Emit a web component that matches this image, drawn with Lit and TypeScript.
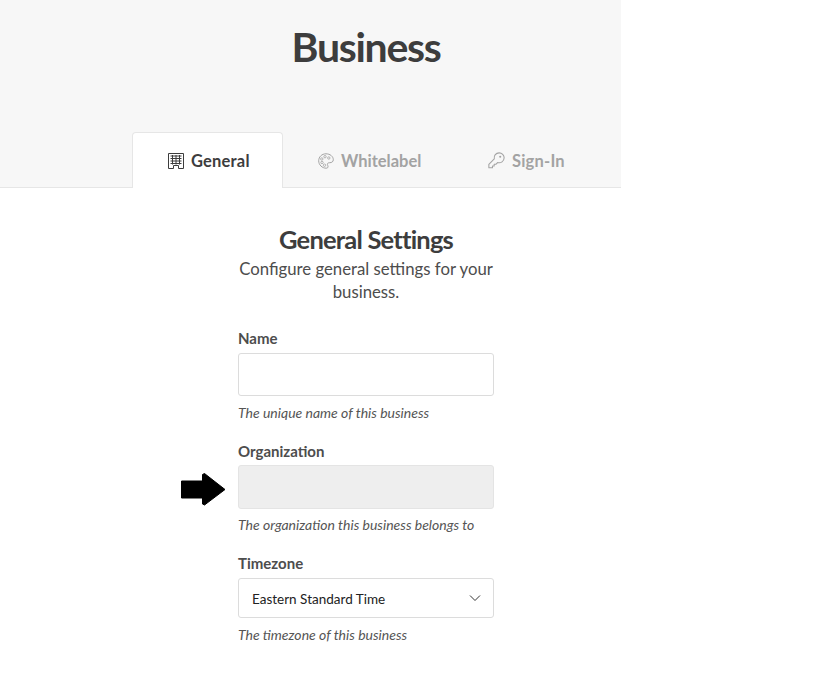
import { LitElement, html, css, svg } from 'lit';
import { customElement } from 'lit/decorators.js';

const buildingIcon = svg`<path d="M.5.500h15v15h-5v-3h-5v3h-5z" fill="none" stroke="currentColor"/>
  <path d="M2.500 3h11M2.500 5.500h11M2.500 8h11M2.500 10.500h11M4.500 2v9.500M8 2v9.500M11.500 2v9.500" stroke="currentColor" stroke-width="1" fill="none"/>`;

const paletteIcon = svg`<path d="M8 .8C3.800.8.700 3.900.700 7.800c0 4 3.400 7.400 7.500 7.400 1.400 0 2-.8 1.800-1.900-.2-1.100-.9-1.700-.5-2.600.4-.9 1.300-1 2.300-1 2 0 3.500-1 3.500-3C15.300 3.500 12.100.8 8 .8z" fill="none" stroke="currentColor"/>
  <circle cx="4" cy="9.500" r="1.200" fill="none" stroke="currentColor" stroke-width=".8"/>
  <circle cx="3.800" cy="6" r="1.200" fill="none" stroke="currentColor" stroke-width=".8"/>
  <circle cx="7" cy="3.700" r="1.200" fill="none" stroke="currentColor" stroke-width=".8"/>
  <circle cx="10.800" cy="5" r="1.200" fill="none" stroke="currentColor" stroke-width=".8"/>
  <circle cx="6.500" cy="12.200" r="1.200" fill="none" stroke="currentColor" stroke-width=".8"/>`;

const keyIcon = svg`<path d="M10.500.8a4.700 4.700 0 0 1 4.700 4.700 4.700 4.700 0 0 1-6.200 4.400l-1.600 1.700H5.800v1.600H4.200v1.600H.8v-3.100l5.100-5.200A4.700 4.700 0 0 1 10.500.8z" fill="none" stroke="currentColor" stroke-linejoin="round"/>
  <circle cx="11.500" cy="4.500" r="1" fill="currentColor"/>`;

@customElement('app-root')
export class AppRoot extends LitElement {
  static styles = css`
    :host {
      display: block;
      position: relative;
      width: 621px;
      min-height: 674px;
      background: #fff;
      font-family: 'Lato', 'Open Sans', sans-serif;
      color: #3d3d3d;
    }
    .header {
      background: #f7f7f7;
      border-bottom: 1px solid #e6e6e6;
      padding-left: 111px;
    }
    h1 {
      margin: 0;
      padding-top: 23px;
      height: 132px;
      box-sizing: border-box;
      text-align: center;
      font-size: 41px;
      line-height: 48px;
      font-weight: 700;
      letter-spacing: -1.300px;
    }
    .tabs {
      display: flex;
      padding-left: 21px;
      height: 56px;
      margin-bottom: -1px;
    }
    .tab {
      display: flex;
      align-items: center;
      gap: 7px;
      height: 56px;
      box-sizing: border-box;
      padding-left: 34px;
      font-size: 16.500px;
      font-weight: 700;
      letter-spacing: 0.200px;
      color: #a3a3a3;
      border: 1px solid transparent;
      border-bottom: none;
    }
    .tab svg {
      width: 16px;
      height: 16px;
      flex: none;
    }
    .tab.active {
      width: 151px;
      padding-left: 35px;
      color: #3d3d3d;
      background: #fff;
      border-color: #e6e6e6;
      border-radius: 4px 4px 0 0;
    }
    .tab.whitelabel {
      width: 170px;
      letter-spacing: 0;
    }
    .tab.signin {
      width: 118px;
    }
    .tab.signin svg {
      width: 17px;
      height: 17px;
    }
    .content {
      padding: 36px 0 0 111px;
    }
    .form {
      width: 256px;
      margin: 0 auto;
    }
    h2 {
      margin: 0;
      text-align: center;
      font-size: 25.500px;
      line-height: 30px;
      font-weight: 700;
      letter-spacing: -0.800px;
    }
    .lead {
      margin: 3px 0 0;
      text-align: center;
      font-size: 16.750px;
      line-height: 23px;
      color: #4d4d4d;
    }
    .field {
      margin-top: 20px;
    }
    .field:first-of-type {
      margin-top: 26px;
    }
    label {
      display: block;
      font-size: 15px;
      line-height: 18px;
      font-weight: 700;
      color: #4d4d4d;
      margin-bottom: 6px;
    }
    .input {
      height: 43px;
      box-sizing: border-box;
      border: 1px solid #dcdcdc;
      border-radius: 3px;
      background: #fff;
    }
    .input.disabled {
      height: 44px;
      margin: -1px 0;
      background: #eeeeee;
      border-color: #e4e4e4;
    }
    .select {
      height: 40px;
      display: flex;
      align-items: center;
      justify-content: space-between;
      padding: 1px 12px 0 13px;
      font-size: 13.500px;
      color: #222;
    }
    .select svg {
      width: 12px;
      height: 8px;
      margin-top: -2px;
    }
    .hint {
      margin-top: 8px;
      font-size: 14px;
      line-height: 18px;
      font-style: italic;
      color: #555;
    }
    .arrow {
      position: absolute;
      left: 181px;
      top: 473px;
      width: 45px;
      height: 33px;
    }
  `;

  render() {
    return html`
      <div class="header">
        <h1>Business</h1>
        <div class="tabs">
          <div class="tab active"><svg viewBox="0 0 16 16">${buildingIcon}</svg>General</div>
          <div class="tab whitelabel"><svg viewBox="0 0 16 16">${paletteIcon}</svg>Whitelabel</div>
          <div class="tab signin"><svg viewBox="0 0 16 16">${keyIcon}</svg>Sign-In</div>
        </div>
      </div>
      <div class="content">
        <div class="form">
          <h2>General Settings</h2>
          <p class="lead">Configure general settings for your business.</p>
          <div class="field">
            <label>Name</label>
            <div class="input"></div>
            <div class="hint">The unique name of this business</div>
          </div>
          <div class="field">
            <label>Organization</label>
            <div class="input disabled"></div>
            <div class="hint">The organization this business belongs to</div>
          </div>
          <div class="field">
            <label>Timezone</label>
            <div class="input select">
              <span>Eastern Standard Time</span>
              <svg viewBox="0 0 12 8"><path d="M1 1.500l5 5 5-5" fill="none" stroke="#333" stroke-width="1"/></svg>
            </div>
            <div class="hint">The timezone of this business</div>
          </div>
        </div>
      </div>
      <svg class="arrow" viewBox="0 0 45 33">
        <path d="M.5 8H21.500V1.500L23.500.5 44 16.500 23.500 32l-2-1V25H.5z" fill="#000" stroke="#000" stroke-linejoin="round"/>
      </svg>
    `;
  }
}
